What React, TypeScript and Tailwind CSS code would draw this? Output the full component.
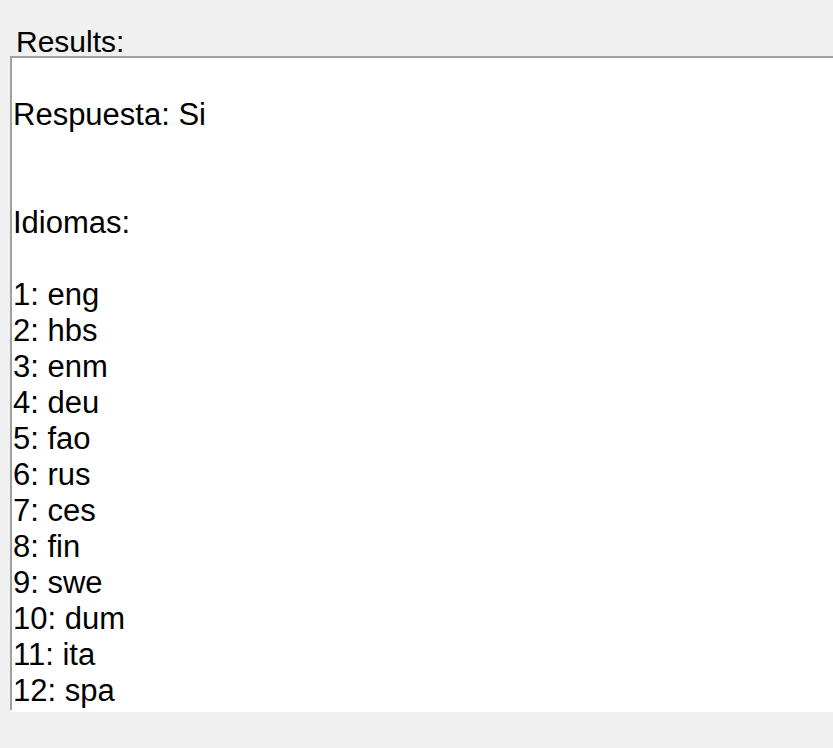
const lines = [
  "",
  "Respuesta: Si",
  "",
  "",
  "Idiomas:",
  "",
  "1: eng",
  "2: hbs",
  "3: enm",
  "4: deu",
  "5: fao",
  "6: rus",
  "7: ces",
  "8: fin",
  "9: swe",
  "10: dum",
  "11: ita",
  "12: spa",
];

export default function App() {
  return (
    <div
      className="w-[833px] h-[748px] bg-[#f0f0f0] pt-[27px] overflow-hidden text-black"
      style={{ fontFamily: '"Liberation Sans", Arial, sans-serif' }}
    >
      <div className="pl-[16px] text-[30px] leading-[29px] h-[29px]">Results:</div>
      <div className="ml-[10px] h-[656px] bg-white">
        <div className="h-[654px] border-l-2 border-t-2 border-[#a0a0a0] pt-[3px] pl-[1px] overflow-hidden">
          {lines.map((line, i) => (
            <div key={i} className="h-[36px] text-[31px] leading-[36px] whitespace-pre">
              {line}
            </div>
          ))}
        </div>
      </div>
    </div>
  );
}
